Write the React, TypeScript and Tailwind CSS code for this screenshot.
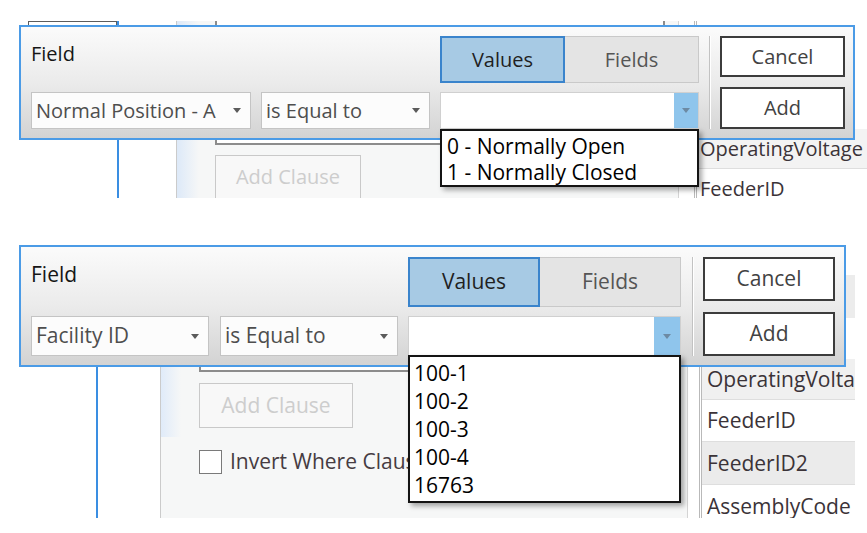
import React from 'react';

function Caret({ color = '#5b5b5b' }: { color?: string }) {
  return (
    <svg width="8" height="5" viewBox="0 0 8 5" aria-hidden="true">
      <path d="M0 0h8L4 5z" fill={color} />
    </svg>
  );
}

type PanelProps = {
  big?: boolean;
  field: string;
  items: string[];
};

function QueryPanel({ big, field, items }: PanelProps) {
  const text = big ? 'text-[21px]' : 'text-[20px]';
  return (
    <div
      className={`absolute left-[19px] flex border-2 border-[#4b9be6] bg-linear-to-b from-[#fbfbfb] via-[#ebebeb] to-[#d3d3d3] pl-[10px] ${
        big ? 'top-[47px] h-[122px] w-[827px] pt-[10px] pr-[9px] pb-[9px]' : 'top-[25px] h-[115px] w-[836px] pt-[9px] pr-[8px] pb-[9px]'
      } ${text}`}
    >
      <div className={`flex flex-col justify-between ${big ? 'w-[367px]' : 'w-[399px]'}`}>
        <p className={`text-[#161616] ${big ? 'mt-[3px] leading-[29px]' : 'mt-[4px] leading-[28px]'}`}>Field</p>
        <div className={`flex ${big ? 'gap-[11px]' : 'gap-[10px]'}`}>
          <div
            className={`flex items-center justify-between border border-[#c4c4c4] bg-[#fcfcfc] pl-[4px] pr-[9px] text-[#4e4e4e] ${
              big ? 'h-[40px] w-[178px]' : 'h-[37px] w-[220px]'
            }`}
          >
            <span className="whitespace-nowrap">{field}</span>
            <Caret />
          </div>
          <div
            className={`flex items-center justify-between border border-[#c4c4c4] bg-[#fcfcfc] pl-[4px] pr-[9px] text-[#4e4e4e] ${
              big ? 'h-[40px] w-[178px]' : 'h-[37px] w-[169px]'
            }`}
          >
            <span className="whitespace-nowrap">is Equal to</span>
            <Caret />
          </div>
        </div>
      </div>

      <div className={`ml-[10px] flex flex-col gap-[9px] ${big ? 'w-[273px]' : 'w-[259px]'}`}>
        <div className={`flex ${big ? 'h-[50px]' : 'h-[47px]'}`}>
          <div
            className={`flex items-center justify-center border-2 border-[#3a84cc] bg-[#a7cae4] text-[#1f1f1f] ${
              big ? 'w-[132px]' : 'w-[125px]'
            }`}
          >
            Values
          </div>
          <div className="flex flex-1 items-center justify-center border border-l-0 border-[#c9c9c9] bg-[#e4e4e4] text-[#555]">
            Fields
          </div>
        </div>
        <div className={`relative flex border border-[#d0d0d0] bg-white ${big ? 'h-[40px]' : 'h-[37px]'}`}>
          <div className="flex-1" />
          <div className={`flex items-center justify-center bg-[#8fc5ec] ${big ? 'w-[26px]' : 'w-[24px]'}`}>
            <Caret color="#6d8aa3" />
          </div>
          <ul
            className={`absolute left-[-1px] top-full z-10 w-[calc(100%+2px)] border-2 border-[#141414] bg-white pt-[2px] text-black shadow-[3px_3px_5px_rgba(0,0,0,0.35)] ${
              big ? 'mt-[0px] h-[148px] pl-[4px] text-[21px] leading-[28px]' : 'mt-[1px] h-[58px] pl-[5px] text-[21px] leading-[26px]'
            }`}
          >
            {items.map((item) => (
              <li key={item} className="whitespace-nowrap">
                {item}
              </li>
            ))}
          </ul>
        </div>
      </div>

      <div className={`w-px bg-[#c2c2c2] shadow-[1px_0_0_#ffffff] ${big ? 'ml-[11px] mr-[10px]' : 'mx-[10px]'}`} />

      <div className={`flex flex-col ${big ? 'w-[132px] gap-[11px]' : 'w-[125px] gap-[10px]'}`}>
        <div
          className={`flex items-center justify-center border-2 border-[#3c3c3c] bg-white text-[#424242] ${
            big ? 'h-[44px]' : 'h-[41px]'
          }`}
        >
          Cancel
        </div>
        <div
          className={`flex items-center justify-center border-2 border-[#3c3c3c] bg-white text-[#424242] ${
            big ? 'h-[44px]' : 'h-[42px]'
          }`}
        >
          Add
        </div>
      </div>
    </div>
  );
}

export default function App() {
  return (
    <div className="h-[533px] w-[867px] overflow-hidden bg-white font-['Open_Sans','Noto_Sans',sans-serif]">
      {/* first capture: Normal Position */}
      <section className="relative h-[198px] overflow-hidden">
        <div className="flex h-full pt-[21px]">
          <div className="w-[117px] shrink-0 pl-[28px]">
            <div className="h-[20px] w-[89px] border border-b-0 border-[#5c5c5c]" />
          </div>
          <div className="flex min-w-0 flex-1 border-l-2 border-[#3a8ee2] bg-[#f6f7f7]">
            <div className="w-[58px] shrink-0 border-r border-[#cbcbcb] bg-white" />
            <div className="w-[22px] shrink-0 bg-linear-to-r from-[#dde9f8] to-[#f6f7f7]" />
            <div className="w-[479px] shrink-0 pl-[16px]">
              <div className="h-[124px] w-[450px] border-2 border-t-0 border-[#8c8c8c] bg-white" />
              <div className="mt-[10px] flex h-[44px] w-[146px] items-center justify-center border border-[#c9c9c9] bg-[#f8f8f8] text-[20px] text-[#cdcdcd]">
                Add Clause
              </div>
            </div>
            <div className="flex min-w-0 flex-1 border-l border-[#d4d4d4] bg-white pl-[15px]">
              <div className="min-w-0 flex-1 overflow-hidden border-l-[3px] border-double border-[#b9b9b9] text-[20px] text-[#3b3338]">
                <div className="h-[68px]" />
                <div className="h-[40px]" />
                <div className="flex h-[40px] items-center whitespace-nowrap border-b border-[#dedede] bg-[#f3f3f3] pl-[3px]">
                  OperatingVoltage
                </div>
                <div className="flex h-[40px] items-center whitespace-nowrap pl-[3px]">FeederID</div>
              </div>
            </div>
          </div>
        </div>
        <QueryPanel field="Normal Position - A" items={['0 - Normally Open', '1 - Normally Closed']} />
      </section>

      {/* second capture: Facility ID */}
      <section className="relative h-[335px] overflow-hidden">
        <div className="ml-[96px] mr-[12px] mt-[77px] flex h-[243px] border-l-2 border-[#3a8ee2] bg-[#f6f7f7]">
          <div className="w-[63px] shrink-0 border-r border-[#cbcbcb] bg-white" />
          <div className="h-[162px] w-[20px] shrink-0 bg-linear-to-r from-[#e0ebf9] to-[#f6f7f7]" />
          <div className="w-[506px] shrink-0 pl-[18px]">
            <div className="h-[97px] w-[470px] border-2 border-[#8c8c8c] bg-white" />
            <div className="mt-[11px] flex h-[45px] w-[154px] items-center justify-center border border-[#c9c9c9] bg-[#f8f8f8] text-[21px] text-[#cdcdcd]">
              Add Clause
            </div>
            <div className="mt-[19px] flex items-center gap-[8px]">
              <div className="h-[24px] w-[23px] shrink-0 border-[1.5px] border-[#7a7a7a] bg-white" />
              <span className="w-[178px] overflow-hidden whitespace-nowrap text-[21px] leading-[29px] text-[#463c42]">
                Invert Where Clause
              </span>
            </div>
          </div>
          <div className="flex min-w-0 flex-1 border-l border-[#d4d4d4] bg-white pl-[11px]">
            <div className="min-w-0 flex-1 overflow-hidden border-l-[3px] border-double border-[#b9b9b9] text-[21px] leading-[29px] text-[#3b3338]">
              <div className="h-[43px] bg-[#ececec]" />
              <div className="h-[41px]" />
              <div className="flex h-[41px] items-center whitespace-nowrap border-b border-[#dedede] bg-[#f0f0f0] pl-[5px]">
                OperatingVoltage
              </div>
              <div className="flex h-[42px] items-center whitespace-nowrap border-b border-[#dedede] pl-[5px]">FeederID</div>
              <div className="flex h-[43px] items-center whitespace-nowrap border-b border-[#dedede] bg-[#ebebeb] pl-[5px]">
                FeederID2
              </div>
              <div className="flex h-[42px] items-center whitespace-nowrap pl-[5px]">AssemblyCode</div>
            </div>
          </div>
        </div>
        <QueryPanel big field="Facility ID" items={['100-1', '100-2', '100-3', '100-4', '16763']} />
      </section>
    </div>
  );
}
